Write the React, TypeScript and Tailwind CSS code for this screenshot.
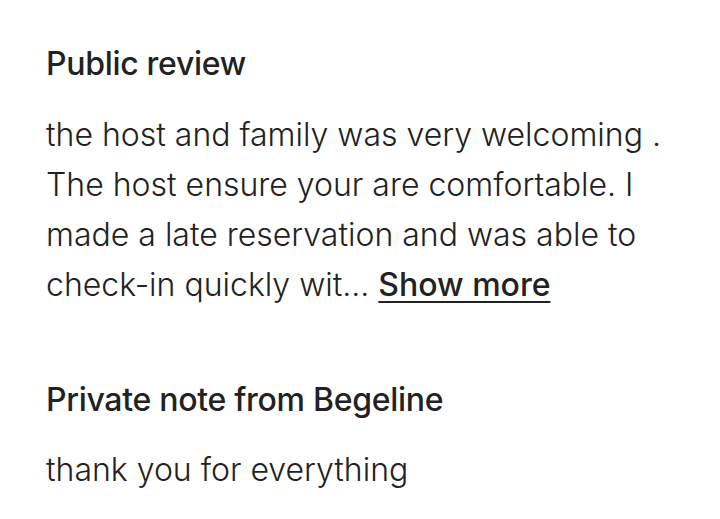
export default function App() {
    return (
        <div
            className="min-h-[519px] bg-white px-[46px] pt-[44px] text-[#222222]"
            style={{ fontFamily: 'Inter, "Noto Sans", sans-serif' }}>
            <section>
                <h2 className="text-[32px] leading-[40px] font-medium tracking-[-0.3px]">
                    Public review
                </h2>
                <p className="mt-[26px] text-[32px] leading-[50px] font-light">
                    the host and family was very welcoming . The host ensure
                    your are comfortable. I made a late reservation and was
                    able to check-in quickly wit...{' '}
                    <button className="font-medium underline decoration-2 underline-offset-[5px]">
                        Show more
                    </button>
                </p>
            </section>
            <section className="mt-[70px]">
                <h2 className="text-[32px] leading-[40px] font-medium tracking-[-0.3px]">
                    Private note from Begeline
                </h2>
                <p className="mt-[25px] text-[32px] leading-[50px] font-light">
                    thank you for everything
                </p>
            </section>
        </div>
    )
}
